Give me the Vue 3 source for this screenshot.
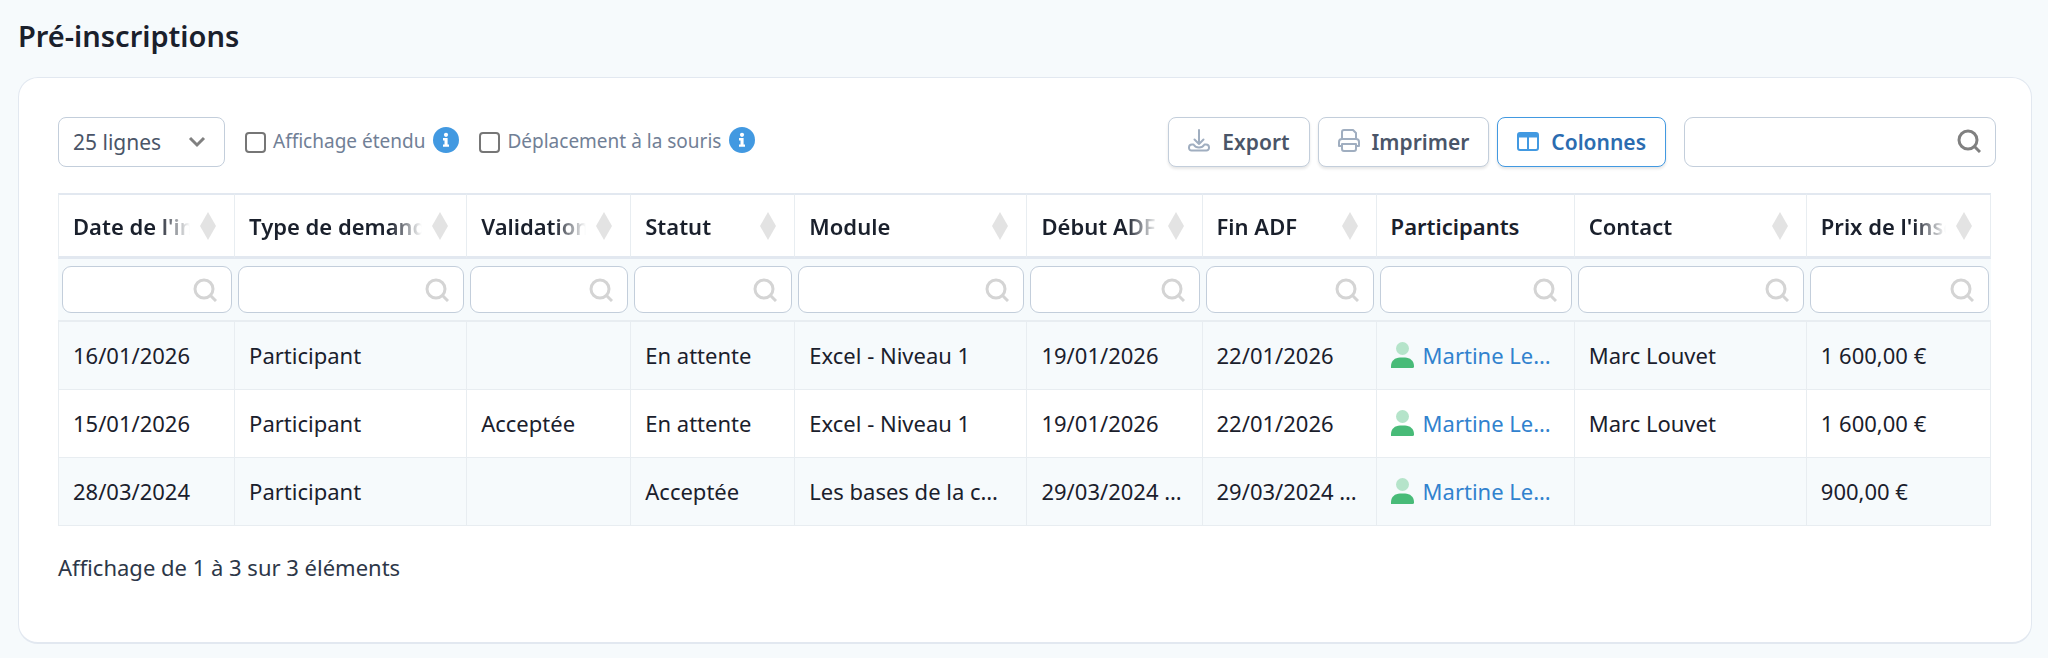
<script setup>
import { ref } from 'vue'

const columns = [
  { key: 'date', label: "Date de l'inscription", weight: 176, sortable: true },
  { key: 'type', label: 'Type de demande', weight: 232, sortable: true },
  { key: 'validation', label: 'Validation', weight: 164, sortable: true },
  { key: 'statut', label: 'Statut', weight: 164, sortable: true },
  { key: 'module', label: 'Module', weight: 232, sortable: true },
  { key: 'debut', label: 'Début ADF', weight: 175, sortable: true },
  { key: 'fin', label: 'Fin ADF', weight: 174, sortable: true },
  { key: 'participants', label: 'Participants', weight: 198, sortable: false },
  { key: 'contact', label: 'Contact', weight: 232, sortable: true },
  { key: 'prix', label: "Prix de l'inscription", weight: 185, sortable: true },
]
const total = columns.reduce((sum, c) => sum + c.weight, 0)

const rows = [
  { date: '16/01/2026', type: 'Participant', validation: '', statut: 'En attente', module: 'Excel - Niveau 1', debut: '19/01/2026', fin: '22/01/2026', participants: 'Martine Le…', contact: 'Marc Louvet', prix: '1 600,00 €' },
  { date: '15/01/2026', type: 'Participant', validation: 'Acceptée', statut: 'En attente', module: 'Excel - Niveau 1', debut: '19/01/2026', fin: '22/01/2026', participants: 'Martine Le…', contact: 'Marc Louvet', prix: '1 600,00 €' },
  { date: '28/03/2024', type: 'Participant', validation: '', statut: 'Acceptée', module: 'Les bases de la c…', debut: '29/03/2024 …', fin: '29/03/2024 …', participants: 'Martine Le…', contact: '', prix: '900,00 €' },
]

const options = ref([
  { id: 'wide', label: 'Affichage étendu', on: false },
  { id: 'drag', label: 'Déplacement à la souris', on: false },
])
</script>

<template>
  <main class="page">
    <h1 class="title">Pré-inscriptions</h1>
    <section class="card">
      <div class="toolbar">
        <div class="select-box">
          <select class="select" aria-label="Nombre de lignes">
            <option>25 lignes</option>
          </select>
          <svg class="chevron" viewBox="0 0 18 12" aria-hidden="true">
            <path d="M2 2 L9 9 L16 2" fill="none" stroke="#808080" stroke-width="3" />
          </svg>
        </div>
        <div v-for="o in options" :key="o.id" class="option">
          <input :id="o.id" v-model="o.on" type="checkbox" class="check" />
          <label :for="o.id" class="option-label">{{ o.label }}</label>
          <svg class="info" viewBox="0 0 26 26" aria-hidden="true">
            <circle cx="13" cy="13" r="13" fill="#4299e1" />
            <circle cx="13" cy="7.8" r="2.1" fill="#fff" />
            <path d="M10 11h4.6v6.4H16v2.4h-6v-2.4h1.5v-4H10z" fill="#fff" />
          </svg>
        </div>
        <div class="actions">
          <button type="button" class="btn">
            <svg class="btn-icon" viewBox="0 0 22 22" fill="none" stroke="#a0aec0" stroke-width="2" stroke-linecap="round" stroke-linejoin="round" aria-hidden="true">
              <path d="M11 -1v14M6.500 8.500L11 13l4.500-4.500M5.500 13.500H4a3 3 0 0 0-3 3V17a2.500 2.500 0 0 0 2.500 2.500h15A2.500 2.500 0 0 0 21 17v-.5a3 3 0 0 0-3-3h-1.500M6 14c1 2 2.500 2.500 5 2.500s4-.5 5-2.500" />
            </svg>
            Export
          </button>
          <button type="button" class="btn">
            <svg class="btn-icon" viewBox="0 0 22 22" fill="none" stroke="#a0aec0" stroke-width="2" stroke-linejoin="round" aria-hidden="true">
              <path d="M4 8V1a2 2 0 0 1 2-2h9l3 3v6M4 15H1v-4a3 3 0 0 1 3-3h14a3 3 0 0 1 3 3v4h-3M4 13h14v5a2 2 0 0 1-2 2H6a2 2 0 0 1-2-2z" />
            </svg>
            Imprimer
          </button>
          <button type="button" class="btn active">
            <svg class="btn-icon" viewBox="0 0 22 22" aria-hidden="true">
              <rect x="1" y="2" width="20" height="17" rx="2" fill="none" stroke="#4299e1" stroke-width="2" />
              <path d="M1 2h20v4.500H1z" fill="#4299e1" />
              <path d="M11 6v13" stroke="#4299e1" stroke-width="2" />
            </svg>
            Colonnes
          </button>
        </div>
        <div class="field search">
          <input type="search" class="input tall" aria-label="Rechercher" />
          <svg class="glass dark" viewBox="0 0 24 24" aria-hidden="true">
            <circle cx="11" cy="11" r="9" /><path d="M17 17l6 6" />
          </svg>
        </div>
      </div>

      <table class="grid">
        <colgroup>
          <col v-for="c in columns" :key="c.key" :style="{ width: (c.weight / total) * 100 + '%' }" />
        </colgroup>
        <thead>
          <tr class="heads">
            <th v-for="c in columns" :key="c.key" scope="col">
              <div class="head">
                <span class="head-text" :class="{ fade: c.sortable }">{{ c.label }}</span>
                <svg v-if="c.sortable" class="sort" viewBox="0 0 16 28" aria-hidden="true">
                  <path d="M8 0L16 14L8 28L0 14z" fill="#e3e3e3" />
                </svg>
              </div>
            </th>
          </tr>
          <tr class="filters">
            <td v-for="c in columns" :key="c.key">
              <div class="field">
                <input type="search" class="input" :aria-label="c.label" />
                <svg class="glass" viewBox="0 0 24 24" aria-hidden="true">
                  <circle cx="11" cy="11" r="9" /><path d="M17 17l6 6" />
                </svg>
              </div>
            </td>
          </tr>
        </thead>
        <tbody>
          <tr v-for="r in rows" :key="r.date">
            <td v-for="c in columns" :key="c.key">
              <a v-if="c.key === 'participants'" href="#" class="person">
                <svg class="user" viewBox="0 0 23 26" aria-hidden="true">
                  <circle cx="11.500" cy="6.500" r="6.500" fill="#b5e4ca" />
                  <path d="M0 26v-2c0-5 4-8.500 9-8.500h5c5 0 9 3.500 9 8.500v.5a1.500 1.500 0 0 1-1.500 1.500z" fill="#48bb78" />
                </svg>
                {{ r[c.key] }}
              </a>
              <template v-else>{{ r[c.key] }}</template>
            </td>
          </tr>
        </tbody>
      </table>
      <p class="summary">Affichage de 1 à 3 sur 3 éléments</p>
    </section>
  </main>
</template>

<style>
body {
  background: #f6fafc;
}
</style>

<style scoped>
.page {
  padding: 16px 16px 12px 18px;
  font-family: "Noto Sans", "Open Sans", sans-serif;
  font-size: 22px;
  color: #1a202c;
}
.title {
  margin: 0 0 21px;
  font-size: 29px;
  line-height: 40px;
  font-weight: 600;
}
.card {
  box-sizing: border-box;
  padding: 39px 35px 58px 39px;
  background: #fff;
  border: 1px solid #e2e8f0;
  border-bottom-width: 2px;
  border-radius: 20px;
}
.toolbar {
  display: flex;
  align-items: center;
}
.select-box {
  position: relative;
  width: 167px;
}
.select {
  box-sizing: border-box;
  width: 100%;
  height: 50px;
  padding: 0 14px;
  border: 1px solid #c3cedb;
  border-radius: 8px;
  background: #fff;
  color: #4a5568;
  font: 400 21px "Noto Sans", sans-serif;
  appearance: none;
}
.chevron {
  position: absolute;
  right: 19px;
  top: 19px;
  width: 18px;
  height: 12px;
  pointer-events: none;
}
.option {
  display: flex;
  align-items: center;
  margin-left: 20px;
}
.check {
  width: 21px;
  height: 21px;
  margin: 0;
  appearance: none;
  border: 2px solid #767676;
  border-radius: 4px;
  background: #fff;
}
.check:checked {
  background: #4299e1;
}
.option-label {
  margin: 0 8px 0 7px;
  padding-bottom: 3px;
  font-size: 19px;
  color: #718096;
}
.info {
  width: 26px;
  height: 26px;
  margin-bottom: 4px;
}
.actions {
  display: flex;
  gap: 8px;
  margin-left: auto;
}
.btn {
  display: flex;
  align-items: center;
  gap: 12px;
  height: 50px;
  padding: 0 19px;
  border: 1px solid #c3cedb;
  border-radius: 8px;
  background: #fff;
  box-shadow: 0 2px 3px rgba(0, 0, 0, 0.1);
  color: #4a5568;
  font: 600 21px "Noto Sans", sans-serif;
}
.btn.active {
  border-color: #4299e1;
  color: #2b6cb0;
}
.btn-icon {
  width: 22px;
  height: 22px;
  overflow: visible;
}
.field {
  position: relative;
}
.search {
  width: 312px;
  margin-left: 18px;
}
.input {
  box-sizing: border-box;
  display: block;
  width: 100%;
  height: 47px;
  padding: 0 46px 0 14px;
  border: 1px solid #c3cedb;
  border-radius: 9px;
  background: #fff;
  color: #1a202c;
  font: 400 21px "Noto Sans", sans-serif;
  appearance: none;
}
.input.tall {
  height: 50px;
}
.glass {
  position: absolute;
  right: 15px;
  top: 12px;
  width: 24px;
  height: 24px;
  fill: none;
  stroke: #d4d4d4;
  stroke-width: 3;
  pointer-events: none;
}
.glass.dark {
  stroke: #808080;
}
.grid {
  width: calc(100% - 5px);
  margin-top: 26px;
  table-layout: fixed;
  border-collapse: separate;
  border-spacing: 0;
}
.grid th,
.grid td {
  box-sizing: border-box;
  padding: 0 13px 0 14px;
  border-left: 1px solid #e8edf1;
  text-align: left;
  white-space: nowrap;
}
.grid th:last-child,
.grid tbody td:last-child {
  border-right: 1px solid #e8edf1;
}
.grid th {
  height: 66px;
  border-top: 2px solid #e2e8f0;
  border-bottom: 3px solid #e2e8f0;
  font-weight: 600;
}
.head {
  display: flex;
  align-items: center;
  justify-content: space-between;
  gap: 10px;
}
.head-text {
  flex: 1;
  overflow: hidden;
}
.head-text.fade {
  -webkit-mask-image: linear-gradient(to left, transparent, #000 32px);
  mask-image: linear-gradient(to left, transparent, #000 32px);
}
.sort {
  flex: none;
  width: 16px;
  height: 28px;
  margin-right: 5px;
}
.grid .filters td {
  height: 63px;
  padding: 0 2px 0 4px;
  border-left: 0;
  border-bottom: 2px solid #e8edf1;
  background: #f6fafc;
}
.grid tbody td {
  height: 68px;
  padding-bottom: 2px;
  border-bottom: 1px solid #e8edf1;
}
.grid tbody tr:nth-child(odd) td {
  background: #f6fafc;
}
.person {
  display: flex;
  align-items: center;
  gap: 9px;
  color: #3182ce;
  text-decoration: none;
}
.user {
  width: 23px;
  height: 26px;
}
.summary {
  margin: 24px 0 0;
  line-height: 34px;
  color: #2d3748;
}
</style>
